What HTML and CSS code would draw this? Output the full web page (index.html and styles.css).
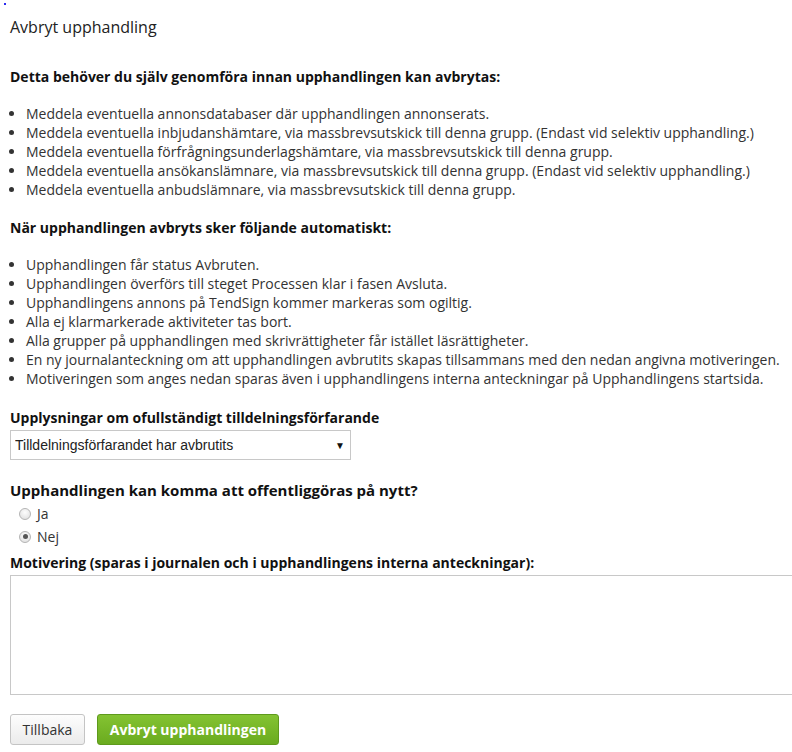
FILE: index.html
```html
<!DOCTYPE html>
<html lang="sv">
<head>
  <meta charset="UTF-8" />
  <title>Avbryt upphandling</title>
  <link rel="stylesheet" href="styles.css">
</head>
<body>
  <span class="marker"></span>

  <div class="page">
    <h1 class="title">Avbryt upphandling</h1>

    <h3 class="section">Detta behöver du själv genomföra innan upphandlingen kan avbrytas:</h3>
    <ul class="steps">
      <li>Meddela eventuella annonsdatabaser där upphandlingen annonserats.</li>
      <li>Meddela eventuella inbjudanshämtare, via massbrevsutskick till denna grupp. (Endast vid selektiv upphandling.)</li>
      <li>Meddela eventuella förfrågningsunderlagshämtare, via massbrevsutskick till denna grupp.</li>
      <li>Meddela eventuella ansökanslämnare, via massbrevsutskick till denna grupp. (Endast vid selektiv upphandling.)</li>
      <li>Meddela eventuella anbudslämnare, via massbrevsutskick till denna grupp.</li>
    </ul>

    <h3 class="section">När upphandlingen avbryts sker följande automatiskt:</h3>
    <ul class="steps">
      <li>Upphandlingen får status Avbruten.</li>
      <li>Upphandlingen överförs till steget Processen klar i fasen Avsluta.</li>
      <li>Upphandlingens annons på TendSign kommer markeras som ogiltig.</li>
      <li>Alla ej klarmarkerade aktiviteter tas bort.</li>
      <li>Alla grupper på upphandlingen med skrivrättigheter får istället läsrättigheter.</li>
      <li>En ny journalanteckning om att upphandlingen avbrutits skapas tillsammans med den nedan angivna motiveringen.</li>
      <li>Motiveringen som anges nedan sparas även i upphandlingens interna anteckningar på Upphandlingens startsida.</li>
    </ul>

    <form class="cancel-form">
      <label class="field-label" for="reason">Upplysningar om ofullständigt tilldelningsförfarande</label>
      <div class="select-wrap">
        <select id="reason">
          <option>Tilldelningsförfarandet har avbrutits</option>
        </select>
        <span class="select-arrow">&#9660;</span>
      </div>

      <p class="question">Upphandlingen kan komma att offentliggöras på nytt?</p>
      <label class="radio"><input type="radio" name="again" value="ja"> Ja</label>
      <label class="radio"><input type="radio" name="again" value="nej" checked> Nej</label>

      <label class="field-label motivation-label" for="motivation">Motivering (sparas i journalen och i upphandlingens interna anteckningar):</label>
      <textarea id="motivation"></textarea>

      <div class="actions">
        <button type="button" class="btn btn-default">Tillbaka</button>
        <button type="submit" class="btn btn-primary">Avbryt upphandlingen</button>
      </div>
    </form>
  </div>
</body>
</html>
```

FILE: styles.css
```css
* {
  box-sizing: border-box;
}

html {
  overflow-x: hidden;
}

body {
  margin: 0;
  font-family: 'Open Sans', 'Noto Sans', sans-serif;
  font-size: 14px;
  line-height: 19px;
  color: #333;
  background: #fff;
}

.marker {
  position: absolute;
  left: 4px;
  top: 3px;
  width: 2px;
  height: 2px;
  background: #2a2af0;
}

.page {
  padding: 16px 10px 0;
}

.title {
  margin: 0;
  font-size: 16px;
  line-height: 22px;
  font-weight: 400;
  color: #222;
}

.section {
  margin: 29px 0 0;
  font-size: 14px;
  line-height: 19px;
  font-weight: 700;
  color: #111;
}

.steps {
  margin: 18px 0 0;
  padding-left: 16px;
}

.steps + .section {
  margin-top: 19px;
}

.steps li {
  line-height: 19px;
}

.cancel-form {
  margin-top: 20px;
  display: flex;
  flex-direction: column;
  align-items: flex-start;
}

.field-label {
  font-weight: 700;
  color: #111;
  line-height: 19px;
}

.select-wrap {
  position: relative;
  margin-top: 3px;
  width: 341px;
}

.select-wrap select {
  appearance: none;
  -webkit-appearance: none;
  width: 100%;
  height: 30px;
  padding: 0 24px 0 4px;
  border: 1px solid #c8c8c8;
  border-radius: 0;
  background: #fff;
  font-family: 'Liberation Sans', Arial, sans-serif;
  font-size: 14px;
  color: #222;
}

.select-arrow {
  position: absolute;
  right: 6px;
  top: 10px;
  font-size: 10px;
  line-height: 10px;
  color: #111;
  pointer-events: none;
}

.question {
  margin: 20px 0 0;
  font-size: 15px;
  line-height: 20px;
  font-weight: 700;
  color: #111;
}

.radio {
  display: flex;
  align-items: center;
  gap: 6px;
  margin-left: 9px;
  height: 23px;
  line-height: 23px;
}

.question + .radio {
  margin-top: 2px;
}

.radio input {
  appearance: none;
  -webkit-appearance: none;
  margin: 0;
  width: 12px;
  height: 12px;
  border-radius: 50%;
  border: 1px solid #b4b4b4;
  background: radial-gradient(circle at 50% 35%, #fdfdfd, #dcdcdc);
  display: grid;
  place-items: center;
}

.radio input:checked::after {
  content: "";
  width: 5px;
  height: 5px;
  border-radius: 50%;
  background: #555;
}

.motivation-label {
  margin-top: 5px;
}

textarea {
  margin-top: 3px;
  width: 800px;
  height: 120px;
  border: 1px solid #c8c8c8;
  border-radius: 0;
  resize: none;
  font-family: inherit;
}

.actions {
  display: flex;
  gap: 12px;
  margin-top: 19px;
}

.btn {
  height: 31px;
  padding: 0;
  border-radius: 3px;
  font-family: 'Open Sans', 'Noto Sans', sans-serif;
  font-size: 14px;
  white-space: nowrap;
  cursor: pointer;
}

.btn-default {
  width: 75px;
  background: linear-gradient(#fdfdfd, #ebebeb);
  border: 1px solid #c4c4c4;
  color: #333;
}

.btn-primary {
  width: 182px;
  background: linear-gradient(#84c332, #6aab1f);
  border: 1px solid #5e9a1c;
  color: #fff;
  font-weight: 700;
}
```
